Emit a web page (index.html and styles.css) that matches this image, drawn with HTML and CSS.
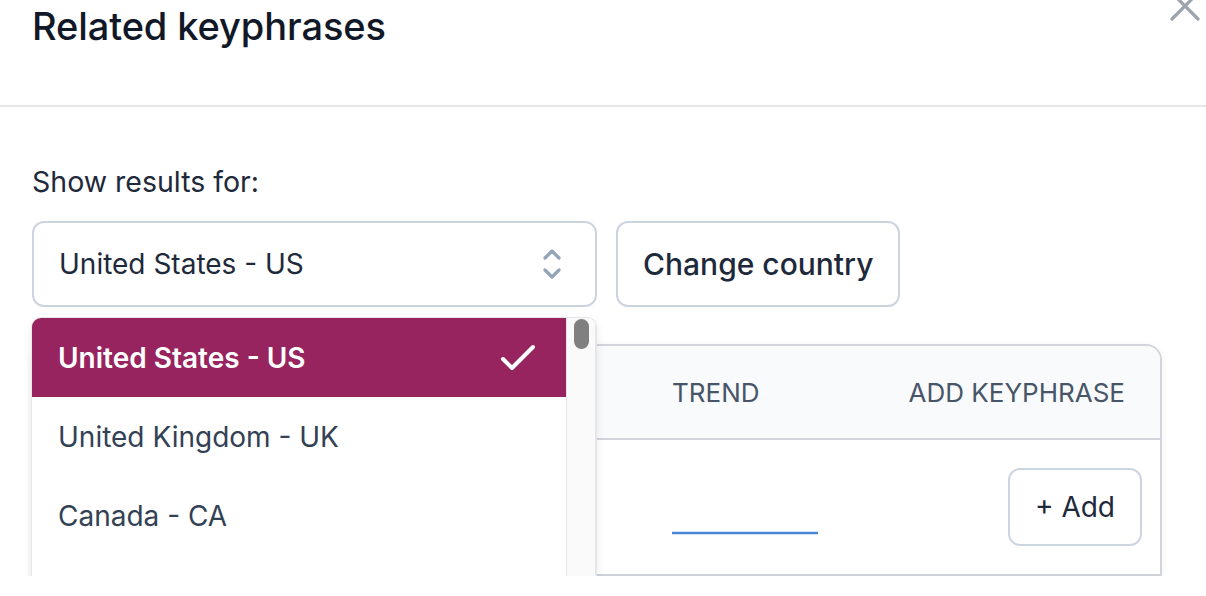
FILE: index.html
```html
<!DOCTYPE html>
<html lang="en">
<head>
<meta charset="utf-8">
<title>Related keyphrases</title>
<link rel="stylesheet" href="styles.css">
</head>
<body>
<div class="modal">
  <header class="modal-header">
    <h1 class="modal-title">Related keyphrases</h1>
    <button class="close" aria-label="Close">
      <svg width="34" height="34" viewBox="0 0 34 34"><path d="M4 4 L30 30 M30 4 L4 30" stroke="#9ca3af" stroke-width="3.2" stroke-linecap="round" fill="none"/></svg>
    </button>
  </header>
  <div class="modal-body">
    <label class="label">Show results for:</label>
    <div class="controls">
      <div class="select-wrap">
        <div class="select">
          <span>United States - US</span>
          <svg width="22" height="34" viewBox="0 0 22 34"><path d="M4 11 L11 4 L18 11 M4 23 L11 30 L18 23" stroke="#94a3b8" stroke-width="3.2" stroke-linecap="round" stroke-linejoin="round" fill="none"/></svg>
        </div>
        <div class="menu">
          <ul class="options">
            <li class="option selected"><span>United States - US</span>
              <svg width="36" height="28" viewBox="0 0 36 28"><path d="M3 15 L12 24 L33 3" stroke="#fff" stroke-width="4" stroke-linecap="round" stroke-linejoin="round" fill="none"/></svg>
            </li>
            <li class="option">United Kingdom - UK</li>
            <li class="option">Canada - CA</li>
          </ul>
          <div class="scrollbar"><div class="thumb"></div></div>
        </div>
      </div>
      <button class="btn">Change country</button>
    </div>
    <div class="table">
      <div class="thead">
        <div class="th"></div>
        <div class="th"></div>
        <div class="th">Trend</div>
        <div class="th th-right">Add keyphrase</div>
      </div>
      <div class="tr">
        <div class="td"></div>
        <div class="td"></div>
        <div class="td"><svg class="spark" width="146" height="52" viewBox="0 0 146 52"><path d="M0 50 L146 50" stroke="#4a86d8" stroke-width="2.5" fill="none"/></svg></div>
        <div class="td td-right"><button class="btn btn-add">+ Add</button></div>
      </div>
    </div>
  </div>
</div>
</body>
</html>
```

FILE: styles.css
```css
* { box-sizing: border-box; }
html, body { margin: 0; padding: 0; background: #fff; }
body { font-family: Inter, "Noto Sans", "Liberation Sans", sans-serif; color: #1e293b; }

.modal { position: relative; width: 1206px; height: 576px; overflow: hidden; background: #fff; }

.modal-header { height: 107px; padding: 0 32px; border-bottom: 2px solid #e5e7eb; }
.modal-title { margin: 0; font-size: 38px; line-height: 52px; font-weight: 500; color: #111827; letter-spacing: -0.1px; }
.close { position: absolute; top: -11px; right: 4px; padding: 0; border: 0; background: none; }

.modal-body { padding: 58px 44px 0 32px; }
.label { display: block; font-size: 28.5px; line-height: 34px; color: #1e293b; margin-bottom: 22px; }

.controls { display: flex; gap: 19px; height: 86px; }
.select-wrap { position: relative; width: 565px; }
.select { height: 86px; display: flex; align-items: center; justify-content: space-between; padding: 0 32px 0 25px; border: 2px solid #cbd5e1; border-radius: 12px; font-size: 28px; color: #1e293b; }
.btn { font-family: inherit; height: 86px; padding: 0 25px; border: 2px solid #cbd5e1; border-radius: 12px; background: #fff; font-size: 30px; font-weight: 500; color: #1e293b; }

.menu { position: absolute; top: 96px; left: -1px; width: 566px; height: 300px; display: flex; background: #fff; border: 1px solid #e5e7eb; border-bottom: 0; border-radius: 10px 10px 0 0; box-shadow: 0 4px 10px rgba(0,0,0,0.08); z-index: 2; overflow: hidden; }
.options { list-style: none; margin: 0; padding: 0; flex: 1; }
.option { height: 79px; display: flex; align-items: center; justify-content: space-between; padding: 0 30px 0 26px; font-size: 28px; color: #334155; }
.option.selected { background: #97235f; color: #fff; font-weight: 600; }
.scrollbar { width: 30px; background: #fafafa; border-left: 1px solid #e5e5e5; border-right: 1px solid #e5e5e5; padding: 1px 0 0 7px; }
.thumb { width: 15px; height: 30px; border-radius: 8px; background: #808080; }

.table { margin-top: 37px; width: 1130px; border: 2px solid #d1d5db; border-bottom: 0; border-radius: 16px 16px 0 0; box-shadow: 0 2px 8px rgba(0,0,0,0.06); overflow: hidden; }
.thead, .tr { display: grid; grid-template-columns: 1fr 200px 235px 289px; }
.thead { height: 94px; background: #f9fafb; border-bottom: 2px solid #d1d5db; align-items: center; }
.th { padding: 0 36px; font-size: 26px; text-transform: uppercase; color: #475569; white-space: nowrap; }
.th-right { text-align: right; padding-right: 35px; }
.tr { height: 137px; align-items: center; border-bottom: 3px solid #cfd3d9; }
.td { padding: 0 36px; font-size: 28px; }
.spark { display: block; margin-top: 3px; }
.td-right { display: flex; justify-content: flex-end; padding-right: 18px; }
.btn-add { height: 78px; padding: 0 25px; font-weight: 400; font-size: 28px; }
```
